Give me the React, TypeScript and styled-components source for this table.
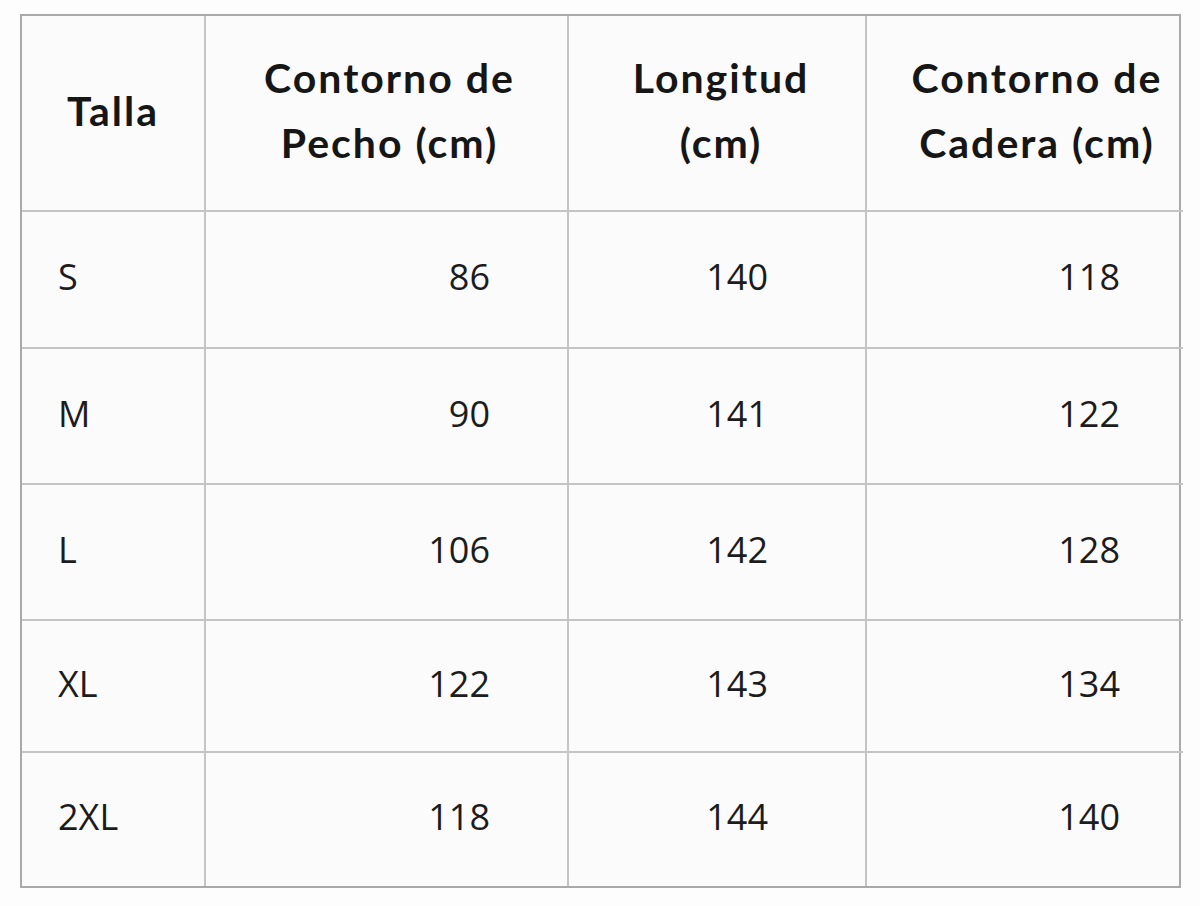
import React from 'react';
import styled, { createGlobalStyle } from 'styled-components';

const GlobalStyle = createGlobalStyle`
  html, body {
    margin: 0;
    padding: 0;
    background: #fdfdfd;
  }
`;

const Page = styled.div`
  padding: 14px 19px 0 20px;
`;

const Table = styled.div`
  display: grid;
  grid-template-columns: 184px 363px 298px 316px;
  grid-template-rows: 196px 137px 136px 136px 132px 133px;
  width: 1161px;
  border: 2px solid #a9a9a9;
  box-sizing: border-box;
  background: #fbfbfb;
`;

const HeadCell = styled.div<{ $shift?: number; $last?: boolean }>`
  display: flex;
  align-items: center;
  justify-content: center;
  text-align: center;
  padding-left: ${p => p.$shift ?? 0}px;
  padding-bottom: 6px;
  border-right: ${p => (p.$last ? 'none' : '2px solid #c4c4c4')};
  border-bottom: 2px solid #c4c4c4;
  font-family: Lato, 'Noto Sans', sans-serif;
  font-weight: 700;
  font-size: 41px;
  letter-spacing: 2px;
  line-height: 65px;
  color: #161616;
`;

const Cell = styled.div<{ $align: 'left' | 'right'; $pad: number; $last?: boolean; $bottom?: boolean }>`
  display: flex;
  align-items: center;
  justify-content: ${p => (p.$align === 'left' ? 'flex-start' : 'flex-end')};
  padding-left: ${p => (p.$align === 'left' ? p.$pad : 0)}px;
  padding-right: ${p => (p.$align === 'right' ? p.$pad : 0)}px;
  padding-bottom: 6px;
  border-right: ${p => (p.$last ? 'none' : '2px solid #c4c4c4')};
  border-bottom: ${p => (p.$bottom ? 'none' : '2px solid #c4c4c4')};
  font-family: 'Open Sans', 'Noto Sans', sans-serif;
  font-weight: 400;
  font-size: 36px;
  color: #1c1c1c;
`;

const rows = [
  ['S', '86', '140', '118'],
  ['M', '90', '141', '122'],
  ['L', '106', '142', '128'],
  ['XL', '122', '143', '134'],
  ['2XL', '118', '144', '140'],
];

const pads = [36, 77, 97, 63];

export default function App() {
  return (
    <>
      <GlobalStyle />
      <Page>
        <Table>
          <HeadCell>Talla</HeadCell>
          <HeadCell $shift={6}>Contorno de<br />Pecho (cm)</HeadCell>
          <HeadCell $shift={8}>Longitud<br />(cm)</HeadCell>
          <HeadCell $shift={24} $last>Contorno de<br />Cadera (cm)</HeadCell>
          {rows.map((r, i) =>
            r.map((v, j) => (
              <Cell
                key={`${i}-${j}`}
                $align={j === 0 ? 'left' : 'right'}
                $pad={pads[j]}
                $last={j === 3}
                $bottom={i === rows.length - 1}
              >
                {v}
              </Cell>
            ))
          )}
        </Table>
      </Page>
    </>
  );
}
